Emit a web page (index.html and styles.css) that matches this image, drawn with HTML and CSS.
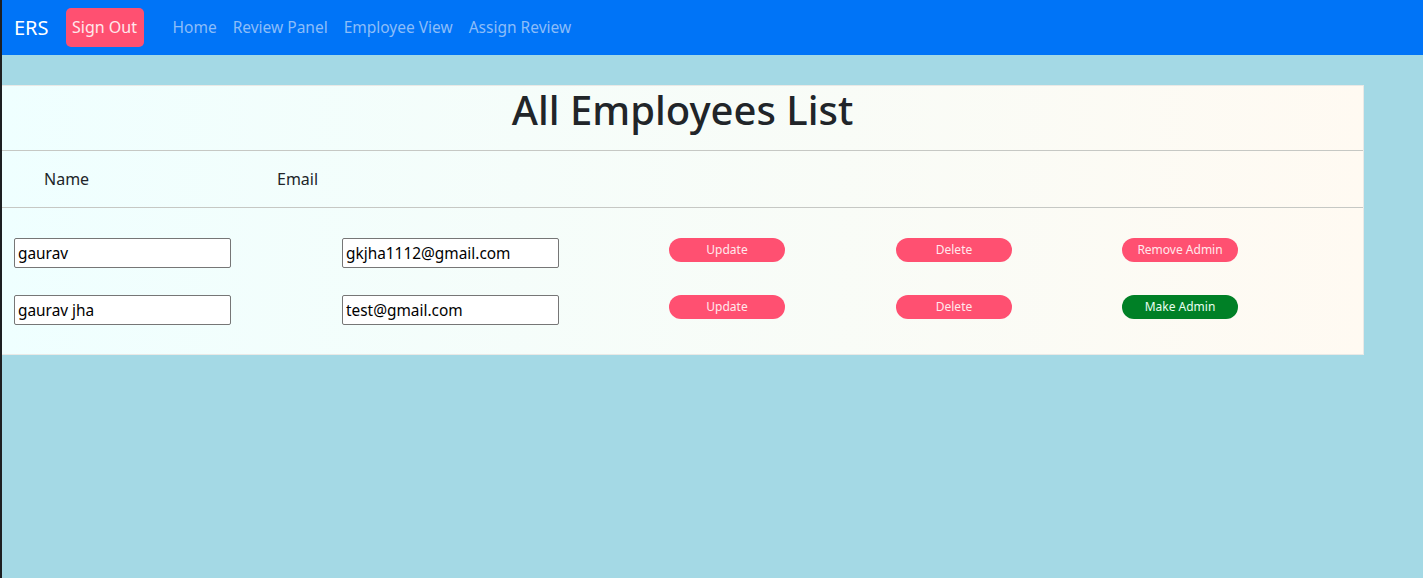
FILE: index.html
```html
<!DOCTYPE html>
<html>
<head>
<meta charset="utf-8">
<title>ERS</title>
<link rel="stylesheet" href="styles.css">
</head>
<body>
<div class="page">
  <nav class="navbar">
    <span class="brand">ERS</span>
    <button class="signout">Sign Out</button>
    <ul class="nav">
      <li><a href="#">Home</a></li>
      <li><a href="#">Review Panel</a></li>
      <li><a href="#">Employee View</a></li>
      <li><a href="#">Assign Review</a></li>
    </ul>
  </nav>
  <main class="card">
    <h1 class="title">All Employees List</h1>
    <hr class="rule">
    <div class="head">
      <span>Name</span>
      <span>Email</span>
    </div>
    <hr class="rule">
    <div class="rows">
      <div class="row">
        <input class="field" type="text" value="gaurav">
        <input class="field" type="text" value="gkjha1112@gmail.com">
        <button class="pill">Update</button>
        <button class="pill">Delete</button>
        <button class="pill">Remove Admin</button>
      </div>
      <div class="row">
        <input class="field" type="text" value="gaurav jha">
        <input class="field" type="text" value="test@gmail.com">
        <button class="pill">Update</button>
        <button class="pill">Delete</button>
        <button class="pill green">Make Admin</button>
      </div>
    </div>
  </main>
</div>
</body>
</html>
```
FILE: styles.css
```css
* { box-sizing: border-box; }
html, body { margin: 0; padding: 0; height: 100%; }
body {
  background: #1d1f21;
  font-family: "Noto Sans", "Open Sans", sans-serif;
  color: #212529;
}
.page {
  margin-left: 2px;
  min-height: 100%;
  background: #a4d9e5;
  padding-bottom: 1px;
}
.navbar {
  height: 55px;
  background: #0074f7;
  display: flex;
  align-items: center;
  padding-left: 12px;
  padding-bottom: 1px;
}
.brand {
  color: #fff;
  font-size: 20px;
  margin-right: 17px;
}
.signout {
  height: 39px;
  width: 78px;
  background: #ff5071;
  border: none;
  border-radius: 5px;
  color: #ffe8ec;
  font-family: inherit;
  font-size: 16px;
  padding: 0;
}
.nav {
  display: flex;
  list-style: none;
  margin: 0 0 0 21px;
  padding: 0;
}
.nav a {
  display: block;
  padding: 8px;
  color: #8cbdf9;
  text-decoration: none;
  font-size: 15.5px;
}
.card {
  margin-top: 30px;
  width: 1362px;
  background: linear-gradient(to right, #efffff, #fffaf2);
  border: 1px solid #e9e9e6;
  border-left: none;
  padding-bottom: 29px;
}
.title {
  margin: 0;
  text-align: center;
  font-size: 40px;
  font-weight: 500;
  line-height: 48px;
  height: 64px;
}
.rule {
  margin: 0;
  border: none;
  border-top: 1px solid #c6c8c4;
}
.head {
  display: grid;
  grid-template-columns: 233px 1fr;
  padding-left: 42px;
  height: 56px;
  align-items: center;
  font-size: 16px;
}
.rows {
  padding: 30px 0 0 12px;
  display: flex;
  flex-direction: column;
  gap: 27px;
}
.row {
  display: grid;
  grid-template-columns: 328px 327px 227px 226px 1fr;
  align-items: start;
}
.field {
  width: 217px;
  height: 30px;
  border: 1px solid #767676;
  border-radius: 2px;
  background: #fff;
  font-family: inherit;
  font-size: 15.4px;
  color: #000;
  padding: 0 3px;
}
.pill {
  width: 116px;
  height: 24px;
  border: none;
  border-radius: 12px;
  background: #ff5071;
  color: #ffe8ec;
  font-family: inherit;
  font-size: 12px;
  padding: 0 0 1px;
}
.pill.green {
  background: #008026;
  color: #e8fff0;
}
```
